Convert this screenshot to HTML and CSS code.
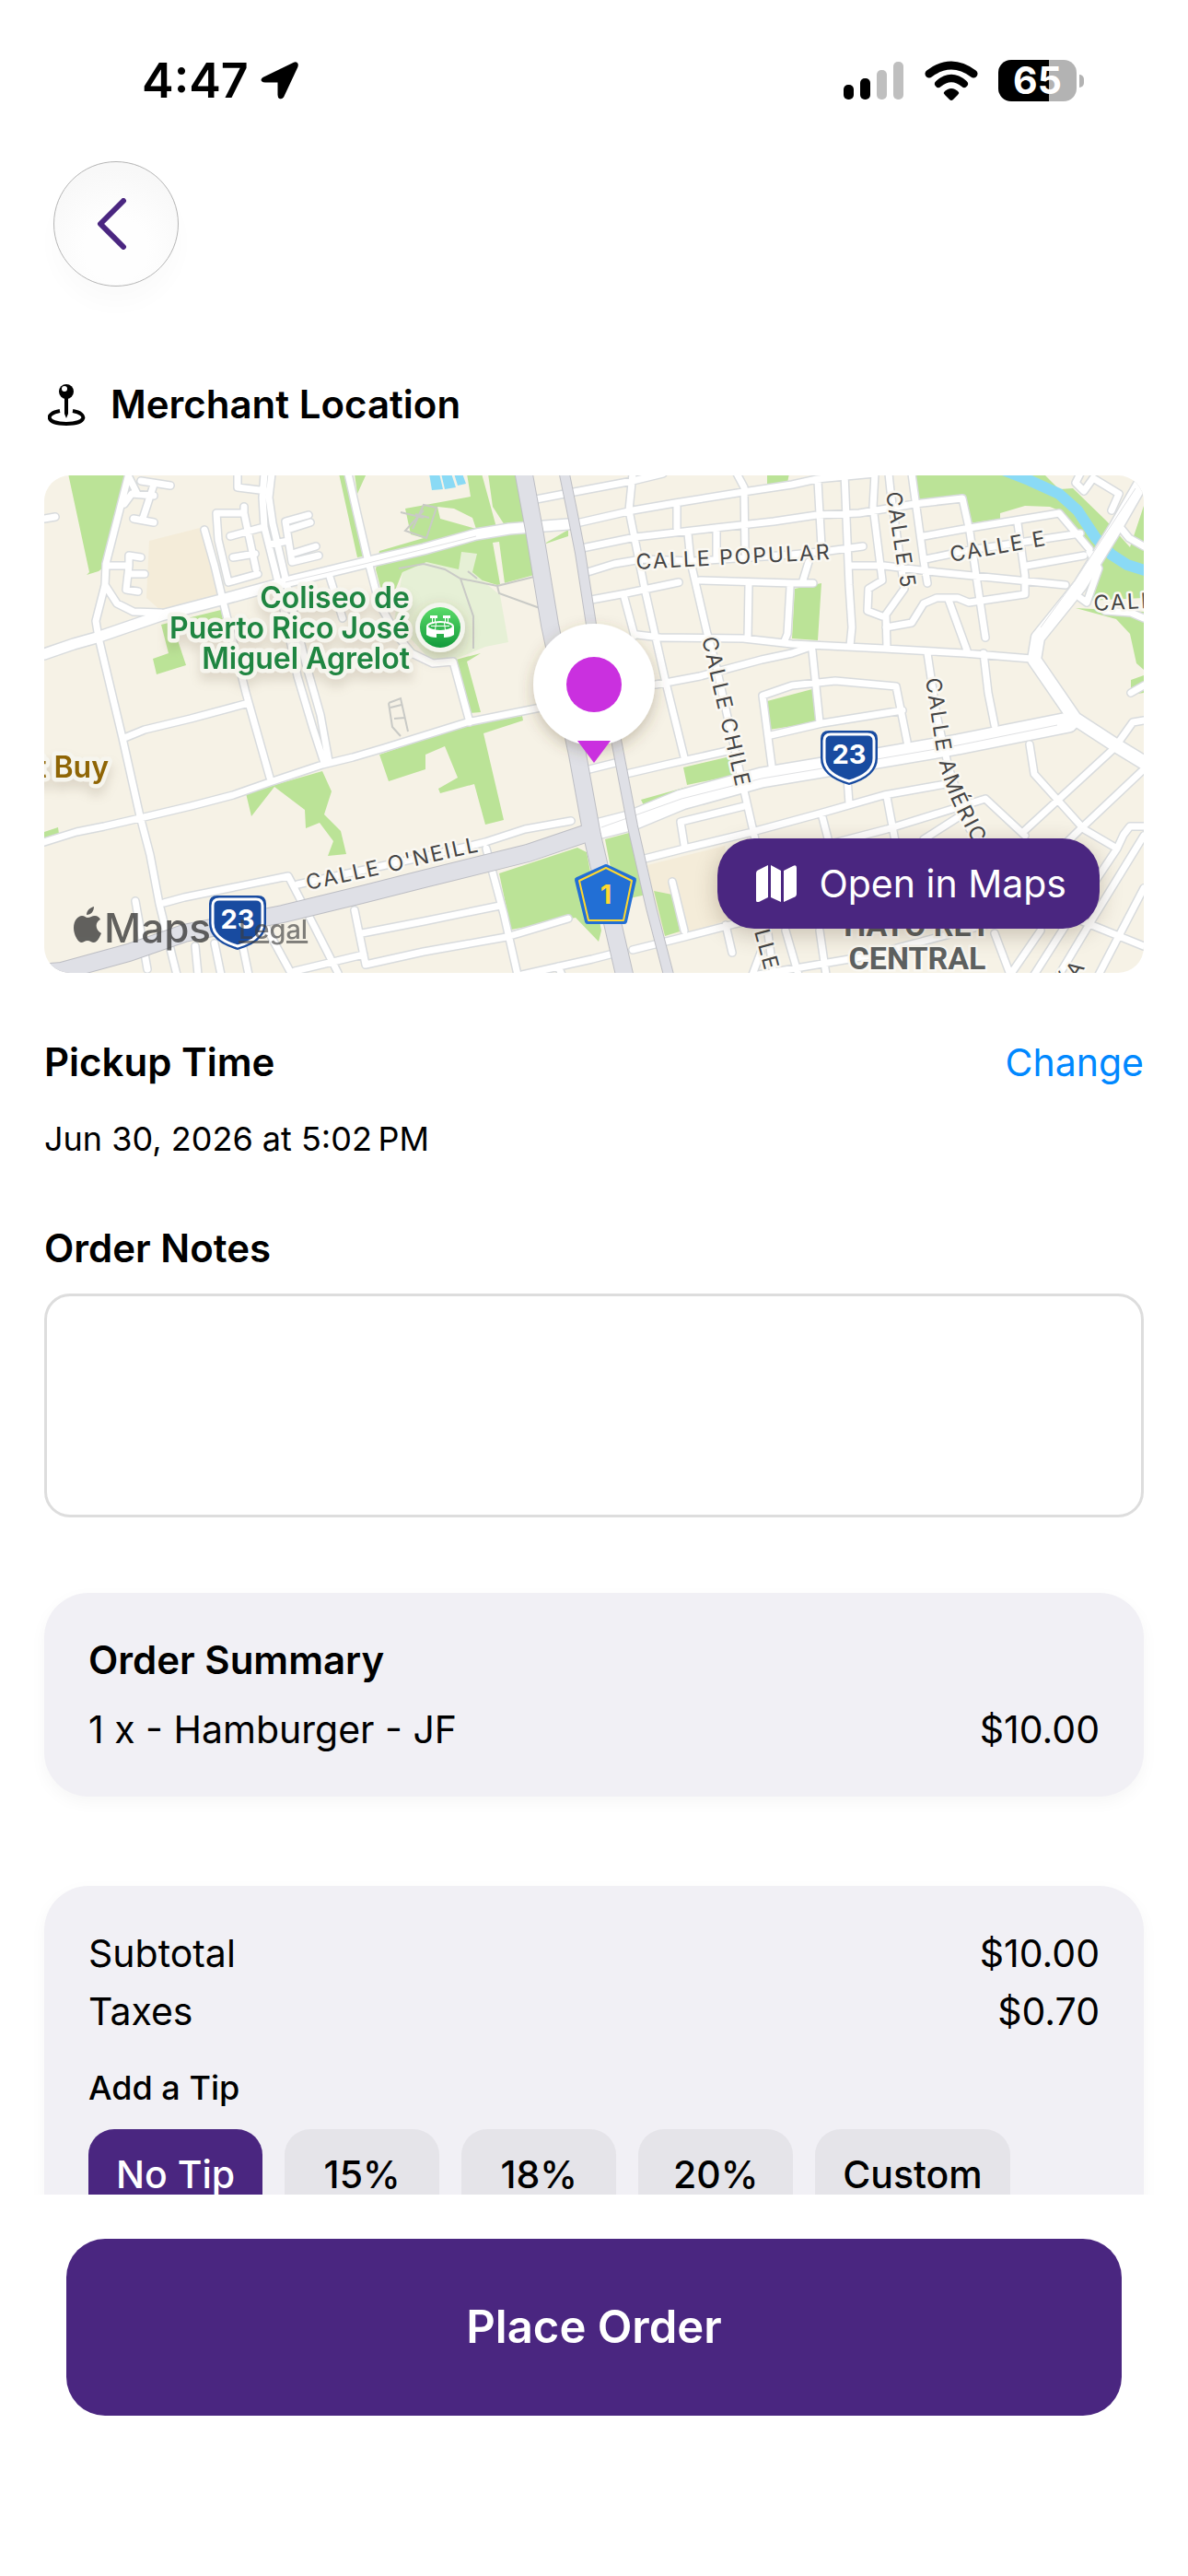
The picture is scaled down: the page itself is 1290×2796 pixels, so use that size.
FILE: index.html
```html
<!DOCTYPE html>
<html lang="en">

<head>
    <meta charset="UTF-8">
    <meta name="viewport" content="width=device-width, initial-scale=1.0">
    <title>Place Order</title>
    <link rel="stylesheet" href="styles.css">
</head>

<body>
    <div class="status-bar">
        <div class="status-left">
            <span class="clock">4:47</span>
            <svg class="arrow-icon" width="44" height="44" viewBox="0 0 44 44" aria-hidden="true">
                <path d="M5 20 38 4 Q40 3 39 6 L24 38 Q22 40 22 37 V21 H6 Q3 21 5 20Z" fill="#000" stroke="#000" stroke-width="5" stroke-linejoin="round" />
            </svg>
        </div>
        <div class="status-right">
            <svg width="66" height="42" viewBox="0 0 66 42" aria-hidden="true">
                <rect x="0" y="25" width="11" height="16" rx="5" />
                <rect x="18" y="18" width="11" height="23" rx="5" />
                <rect x="36" y="9" width="11" height="32" rx="5" fill="#bfbfbf" />
                <rect x="54" y="0" width="11" height="41" rx="5" fill="#bfbfbf" />
            </svg>
            <svg width="58" height="44" viewBox="0 0 58 44" aria-hidden="true">
                <path d="M5 14 Q29 -4 53 14" fill="none" stroke="#000" stroke-width="9" stroke-linecap="round" />
                <path d="M15 25 Q29 13 43 25" fill="none" stroke="#000" stroke-width="8" stroke-linecap="round" />
                <path d="M21 34 Q29 26 37 34 Q38 35 36 37 L31 42 Q29 44 27 42 L22 37 Q20 35 21 34Z" />
            </svg>
            <div class="battery">
                <span class="battery-body">65</span>
                <span class="battery-tip"></span>
            </div>
        </div>
    </div>

    <main class="content">
        <button class="back-button" type="button" aria-label="Back">
            <svg width="34" height="56" viewBox="0 0 34 56" aria-hidden="true">
                <path d="M29 3 4 28 29 53" fill="none" stroke="#4a2680" stroke-width="6" stroke-linecap="round" stroke-linejoin="round" />
            </svg>
        </button>

        <section class="location">
            <h2 class="location-title">
                <svg width="42" height="48" viewBox="0 0 42 48" aria-hidden="true">
                    <path d="M13 31 C-4 34 -2 45 20 45 S44 34 27 31" fill="none" stroke="#000" stroke-width="4" stroke-linecap="butt" />
                    <path d="M18 15 H22 V34 L20 39 18 34Z" />
                    <circle cx="20" cy="10" r="8" />
                    <circle cx="18" cy="7" r="3" fill="#fff" />
                </svg>
                Merchant Location
            </h2>
            <div class="map">
                <svg class="map-canvas" viewBox="0 0 1194 544" preserveAspectRatio="xMidYMid slice" role="img" aria-label="Map of the merchant location">
                    <defs>
                        <path id="streets" d="
                            M92 0 67 98 66 121 56 160 59 178 85 287 104 372 115 414 125 467 139 524 144 544
                            M66 121 79 141 97 150 127 151
                            M87 287 109 278 159 266 222 249
                            M174 61 185 100 195 142 219 238 245 330
                            M239 0 237 26 239 58 254 118 275 220 292 277 304 314
                            M247 0 244 26 248 54 262 114 284 206 300 262 309 312
                            M0 400 35 389 65 383 104 374 159 361 205 349 245 335 302 316 335 308 369 298 459 270 539 254
                            M664 229 712 220 779 202 812 195 835 187
                            M130 466 152 460 265 437 292 489 319 542
                            M99 464 112 538 M164 513 167 544 M185 510 192 544 M215 510 222 544 M239 489 269 544
                            M337 474 349 533 412 519 502 503 569 483
                            M345 499 412 486 495 469 M272 540 347 522
                            M480 407 499 478 514 544 M275 446 412 416 479 400 522 386 572 377
                            M519 544 595 527 622 520 M639 517 695 503 749 489 812 475 M558 535 562 544
                            M0 49 12 47 M105 8 137 13 M119 12 107 49 M97 49 119 53 M119 24 95 22 87 33 M92 4 101 22
                            M70 100 92 100 92 89 105 91 M92 100 89 126 102 128 M92 109 109 109
                            M210 0 210 15 242 19
                            M217 36 217 43 187 43 189 72 200 118 232 109 M217 43 230 104 M202 68 235 59 M205 91 229 87
                            M287 45 262 52 269 96 298 89 M264 61 289 53 M245 77 265 73 M269 87 295 79
                            M330 0 339 40 352 96 364 142 385 178 399 195 422 206 444 204 462 270
                            M310 112 324 157
                            M534 28 565 22 639 8 672 0
                            M569 56 639 40 685 32 759 20 812 12 839 6 902 0
                            M584 81 642 69 729 59 792 52 839 45 885 43 945 33 997 27 1005 63 1012 111 1022 178
                            M590 107 619 98 649 93 705 95 812 88 852 84 889 79
                            M594 137 632 130 689 118 M630 135 641 176
                            M644 175 669 178 759 179 812 185 912 190 999 195 1072 201
                            M639 0 635 40 652 125 675 227 695 308
                            M687 36 687 59 M699 65 702 96 720 174 729 206 759 340 772 397 792 544
                            M730 61 730 93 M752 0 760 15 761 86
                            M712 116 812 119 835 119 M830 96 823 119 M765 121 764 178 M810 123 807 174 803 184
                            M632 326 679 315 742 301 M592 321 620 314
                            M790 317 780 241 812 230 859 225 925 231 937 291
                            M789 284 845 271 932 257 M834 192 842 270
                            M840 8 844 79 M869 0 874 121 877 167 875 187
                            M902 0 900 36 910 116 895 125 894 149 910 155
                            M917 0 919 19 934 125 914 153 915 188 M942 0 955 95 959 119
                            M877 100 912 100 969 107 1109 121
                            M914 167 942 162 955 141 969 135 992 135 1004 140 1065 131 1065 111 1057 54
                            M955 68 1005 59 1102 43 1135 82 M957 93 1005 83 1125 65 M1067 100 1129 89
                            M982 137 1002 192
                            M1165 54 1178 70 1194 79 M1167 22 1139 5 1129 19 1120 10 1125 0 M1167 22 1159 40
                            M1125 135 1132 140 1145 103 1135 85 M1152 149 1180 151 1194 157 M1180 238 1194 230
                            M959 195 969 262 982 319 1005 386 M1020 195 1025 238 1032 273
                            M1070 294 1075 326 1129 386 1165 407 1172 392 1179 383 1194 383
                            M1194 321 1125 386 1080 430 M1194 268 1182 270 1162 298 1062 390
                            M1065 393 1022 353 915 386 842 405 792 415 M955 397 1005 365
                            M652 418 699 406 765 390 842 369 912 349 979 337
                            M872 330 874 358 M844 369 852 400 M915 351 925 404
                            M695 403 691 378 760 361 M682 443 695 496 M740 490 747 520
                            M1194 393 1135 489 1102 544 M1194 450 1145 544 M1165 407 1110 489 1075 544
                            M1125 485 1194 513 M1032 499 1049 544 1082 496 M805 496 819 544 M842 496 849 544
                            M769 544 778 520 M775 544 892 524 1025 489" />
                        <path id="avenues" d="
                            M0 196 32 185 57 178 127 154 192 137 262 118 352 96 412 82 469 66 505 60 569 55" />
                        <path id="main-road" d="M1197 0 1162 61 1125 121 1079 178 1075 202 1119 266 1162 294 1198 316" />
                        <path id="boulevard" d="M600 386 639 376 692 354 779 330 875 314 992 294 1112 270" />
                        <path id="highway" d="M-6 542 19 540 92 520 152 499 259 478 345 457 412 440 525 412 596 388" />
                        <path id="expressway" d="M520 -4 532 61 549 164 579 305 595 393 619 496 631 548" />
                        <path id="side-express" d="M564 -4 573 40 582 86 594 164 622 294 639 383 659 471 679 548" />
                        <linearGradient id="poi-fill" x1="0" y1="0" x2="0" y2="1">
                            <stop offset="0" stop-color="#5bdc69" />
                            <stop offset="1" stop-color="#119a3b" />
                        </linearGradient>
                        <filter id="soft-shadow" x="-30%" y="-30%" width="160%" height="170%">
                            <feDropShadow dx="0" dy="6" stdDeviation="8" flood-color="#5a4a2a" flood-opacity=".3" />
                        </filter>
                        <g id="shield-23">
                            <path d="M9 0 H53 Q62 0 62 9 V30 Q62 50 31 59 Q0 50 0 30 V9 Q0 0 9 0Z" fill="#184ba0" />
                            <path d="M11 4 H51 Q58 4 58 11 V30 Q58 47 31 55 Q4 47 4 30 V11 Q4 4 11 4Z" fill="none" stroke="#fff" stroke-width="3" />
                            <text class="shield-text" x="31" y="36">23</text>
                        </g>
                        <path id="oneill-path" d="M286 452 Q350 439 412 424 T490 408" />
                        <path id="america-path" d="M957 223 968 294 Q974 330 986 356 T1025 430" />
                    </defs>

                    <rect width="1194" height="544" fill="#f6f2e6" />

                    <!-- school and commercial blocks -->
                    <path fill="#f4ecd9" d="M114 73 169 59 192 130 127 149 111 135Z M655 425 739 404 755 480 699 499 668 500Z" />

                    <!-- parks -->
                    <path fill="#bbe397" d="
                        M26 0H89L67 100 59 106 46 110 49 107Z
                        M320 0H350L340 22 337 0 329 0 350 89 340 91Z
                        M127 164 192 148 194 158 142 172 154 208 122 218 118 201 135 195Z
                        M219 347 302 323 312 345 304 370 322 388 328 413 308 415 314 399 299 379 284 385 283 365 250 340 225 372Z
                        M364 305 459 273 519 263 520 268 477 282 499 376 479 381 467 337 430 347 428 342 449 330 435 296 414 305 414 321 374 334Z
                        M0 389 15 384 16 391 0 396Z
                        M459 0H512L532 110 492 121 440 105 389 107 372 149 360 104 364 84 412 70 398 66 392 38 463 25Z
                        M447 202 474 195 459 204 474 259 462 260Z
                        M545 75 569 61 569 68 545 76Z
                        M694 319 745 307 747 328 698 338Z M648 354 698 340 652 362Z
                        M494 434 579 406 589 411 605 496 602 508 577 482 507 495Z
                        M609 397 635 390 654 457 622 464Z M662 453 682 457 690 497 674 502Z
                        M785 247 834 234 839 270 787 278Z M785 0H809L807 10 785 13Z
                        M815 125 844 119 840 181 812 179Z
                        M945 0H1085L1102 17 1117 16 1154 52 1179 80 1194 35 1194 135 1132 138 1145 103 1135 75 1102 40 1092 36 1065 35 1038 43 1038 49 1005 54 997 27 950 28Z
                        M1120 146 1194 150 1194 213 1186 206 1179 174 1164 158Z M1180 224 1194 219V238L1180 240Z" />
                    <path fill="#f6f2e6" d="M475 0H482L487 36 500 56 492 62Z M427 36 445 38 465 48 469 60 430 49Z M487 75 494 74 500 119 495 120Z" />

                    <!-- arena grounds -->
                    <path fill="#e6f0d6" d="M389 107 415 96 450 104 453 85 470 87 465 107 495 132 504 183 479 188 445 202 422 205 380 160Z" />
                    <g fill="none" stroke="#c9cac6" stroke-width="2">
                        <path d="M387 42 412 48 M412 40 392 62 415 70 426 37 412 34 400 60 M403 44 418 48" />
                        <path d="M385 103 412 98 435 104 452 114 492 122 532 112 M452 114 466 155 466 190 M492 122 494 130 538 146 M460 106 470 114" />
                        <path d="M374 249 387 244 395 280 M374 249 378 275 387 285 M376 254 388 251 M380 266 392 265" />
                    </g>

                    <!-- water -->
                    <path d="M1036 -6 1069 7 1102 22 1122 40 1142 70 1159 88 1176 99 1198 106" fill="none" stroke="#8adaf5" stroke-width="12" />
                    <path fill="#8adaf5" d="M418 0H429L433 17 421 18Z M431 0H442L447 15 435 17Z M445 0H454L458 11 449 13Z" />

                    <!-- casing is drawn first, then the road surface -->
                    <g class="road-casing">
                        <use href="#streets" stroke-width="10" />
                        <use href="#avenues" stroke-width="14" />
                        <use href="#main-road" stroke-width="17" />
                        <use href="#boulevard" stroke-width="24" />
                    </g>
                    <g class="road-fill">
                        <use href="#streets" stroke-width="7" />
                        <use href="#avenues" stroke-width="11" />
                        <use href="#main-road" stroke-width="14" />
                        <use href="#boulevard" stroke-width="21" />
                    </g>
                    <g fill="none" stroke="#e0e1e3" stroke-width="1">
                        <path d="M605 384 692 353 779 331 875 315 992 295 1100 273 M262 118 352 97 469 68 M1185 16 1120 115 1082 167" />
                    </g>
                    <g class="highway-casing">
                        <use href="#highway" stroke-width="20" />
                        <use href="#side-express" stroke-width="12" />
                        <use href="#expressway" stroke-width="20" />
                    </g>
                    <g class="highway-fill">
                        <use href="#highway" stroke-width="18" />
                        <use href="#side-express" stroke-width="10" />
                        <use href="#expressway" stroke-width="18" />
                    </g>

                    <!-- street names -->
                    <g class="street-name">
                        <text transform="translate(643 104) rotate(-3)">CALLE POPULAR</text>
                        <text transform="translate(914 21) rotate(81)">CALLE 5</text>
                        <text transform="translate(985 96) rotate(-10)">CALLE E</text>
                        <text transform="translate(1140 149) rotate(-3)">CALLE C</text>
                        <text transform="translate(714 179) rotate(77)">CALLE CHILE</text>
                        <text transform="translate(771 497) rotate(75)">LLE</text>
                        <text transform="translate(1117 556) rotate(-56)">ÍA</text>
                        <text><textPath href="#oneill-path">CALLE O'NEILL</textPath></text>
                        <text><textPath href="#america-path">CALLE AMÉRICA</textPath></text>
                    </g>
                    <g class="district-name">
                        <text x="948" y="502">HATO REY</text>
                        <text x="948" y="538">CENTRAL</text>
                    </g>

                    <g class="poi-name">
                        <text x="397" y="146">Coliseo de</text>
                        <text x="397" y="179">Puerto Rico José</text>
                        <text x="397" y="212">Miguel Agrelot</text>
                        <text class="poi-shop" x="70" y="330">Best Buy</text>
                    </g>
                    <circle cx="430" cy="167" r="27" fill="#f4f5ee" filter="url(#soft-shadow)" />
                    <circle cx="430" cy="167" r="22" fill="url(#poi-fill)" />
                    <g fill="#fff">
                        <path d="M419 154h8v3h-8zM433 154h8v3h-8zM421 157h1v5h-1zM424 157h1v5h-1zM435 157h1v5h-1zM438 157h1v5h-1z" />
                        <path d="M415 166 Q430 175 445 166 V175 Q441 178 434 178 V174 H426 V178 Q419 178 415 175Z" />
                        <ellipse cx="430" cy="166" rx="14" ry="5" fill="none" stroke="#fff" stroke-width="2" />
                        <path d="M420 165h20v1h-20zM425 162h1l-1 8h-1zM434 162h1l1 8h-1z" />
                    </g>

                    <use href="#shield-23" x="843" y="279" />
                    <use href="#shield-23" x="179" y="458" />
                    <path d="M610 427 640 441 630 486 H590 L579 441Z" fill="#226fd5" stroke="#226fd5" stroke-width="6" stroke-linejoin="round" />
                    <path d="M610 428 638 442 629 485 H591 L581 442Z" fill="none" stroke="#ffd82f" stroke-width="2" stroke-linejoin="round" />
                    <text class="shield-text shield-yellow" x="610" y="467">1</text>

                    <!-- merchant pin -->
                    <circle cx="597" cy="229" r="66" fill="#fff" filter="url(#soft-shadow)" />
                    <circle cx="597" cy="229" r="30" fill="#ca30df" />
                    <path d="M579 290H615L597 314Z" fill="#ca30df" />

                    <!-- attribution -->
                    <g class="attribution">
                        <path d="M47 482 C50 482 52 480 55 480 C58 480 60 482 61 484 C55 487 55 495 62 499 C60 504 57 509 54 509 C51 509 50 507 47 507 C44 507 43 509 40 509 C36 508 32 500 32 493 C32 485 37 480 41 480 C44 480 45 482 47 482Z M46 479 C46 474 50 471 54 470 C54 475 51 479 46 479Z" />
                        <text class="maps-mark" x="65" y="509">Maps</text>
                        <text class="legal-mark" x="211" y="505">Legal</text>
                    </g>
                </svg>
                <a class="open-maps" href="#">
                    <svg width="44" height="40" viewBox="0 0 44 40" aria-hidden="true">
                        <path d="M0 9 Q0 6 3 5 L13 0 V35 L3 40 Q0 41 0 38Z M16 0 27 6 V40 L16 35Z M30 6 40 1 Q44 -1 44 3 V31 Q44 34 41 35 L30 40Z" fill="#fff" />
                    </svg>
                    Open in Maps
                </a>
            </div>
        </section>

        <section class="pickup">
            <div class="row">
                <h2>Pickup Time</h2>
                <button class="change-button" type="button">Change</button>
            </div>
            <p class="pickup-time">Jun 30, 2026 at 5:02&#8239;PM</p>
        </section>

        <section class="notes">
            <label for="order-notes">Order Notes</label>
            <textarea id="order-notes"></textarea>
        </section>

        <section class="card summary">
            <h2>Order Summary</h2>
            <div class="row">
                <span>1 x - Hamburger - JF</span>
                <span>$10.00</span>
            </div>
        </section>

        <section class="card totals">
            <div class="row">
                <span>Subtotal</span>
                <span>$10.00</span>
            </div>
            <div class="row">
                <span>Taxes</span>
                <span>$0.70</span>
            </div>
            <h3>Add a Tip</h3>
            <div class="tips">
                <button class="tip selected" type="button">No Tip</button>
                <button class="tip" type="button">15%</button>
                <button class="tip" type="button">18%</button>
                <button class="tip" type="button">20%</button>
                <button class="tip" type="button">Custom</button>
            </div>
        </section>
    </main>

    <footer class="checkout">
        <button class="place-order" type="button">Place Order</button>
    </footer>

    <script>
        const tips = document.querySelectorAll('.tip');

        // Only one tip can be selected at a time
        tips.forEach(tip => {
            tip.addEventListener('click', () => {
                tips.forEach(other => other.classList.remove('selected'));
                tip.classList.add('selected');
            });
        });
    </script>
</body>

</html>
```

FILE: styles.css
```css
* {
    box-sizing: border-box;
}

body {
    font-family: Inter, "Liberation Sans", sans-serif;
    font-size: 41px;
    line-height: 50px;
    color: #000;
    background-color: #fff;
    margin: 0;
    height: 100vh;
    display: flex;
    flex-direction: column;
}

h2,
h3,
p {
    margin: 0;
}

h2,
label {
    font-size: 42px;
    font-weight: 600;
}

button {
    font: inherit;
    border: none;
    padding: 0;
    cursor: pointer;
}

/* Status bar */
.status-bar {
    display: flex;
    justify-content: space-between;
    align-items: center;
    height: 175px;
    flex-shrink: 0;
    padding: 0 113px 0 154px;
}

.status-left,
.status-right,
.battery {
    display: flex;
    align-items: center;
}

.status-left {
    gap: 12px;
}

.status-right {
    gap: 22px;
}

.clock {
    font-size: 52px;
    font-weight: 600;
}

.battery {
    gap: 3px;
}

.battery-body {
    width: 85px;
    height: 45px;
    border-radius: 14px;
    background: linear-gradient(to right, #000 65%, #b3b3b3 65%);
    color: #fff;
    font-size: 41px;
    font-weight: 700;
    line-height: 45px;
    text-align: center;
}

.battery-tip {
    width: 5px;
    height: 14px;
    border-radius: 0 5px 5px 0;
    background-color: #b3b3b3;
}

/* Scrolling content */
.content {
    flex: 1;
    min-height: 0;
    overflow-y: auto;
    scrollbar-width: none;
    padding: 0 48px;
}

.back-button {
    display: flex;
    justify-content: center;
    align-items: center;
    width: 136px;
    height: 136px;
    margin-left: 10px;
    padding-right: 8px;
    border: 1px solid #b5b5b5;
    border-radius: 50%;
    background: radial-gradient(circle at 50% 70%, #fefefe 30%, #f8f8f8 75%);
    box-shadow: 0 20px 24px rgba(0, 0, 0, 0.02);
}

.location {
    margin-top: 103px;
}

.location-title {
    display: flex;
    align-items: center;
    gap: 26px;
    padding-left: 4px;
}

.map {
    position: relative;
    margin-top: 52px;
    height: 540px;
    border-radius: 28px;
    overflow: hidden;
}

.map-canvas {
    display: block;
    width: 100%;
    height: 100%;
}

.map-canvas text {
    font-family: Inter, "Liberation Sans", sans-serif;
}

.road-casing,
.road-fill {
    fill: none;
    stroke-linecap: round;
    stroke-linejoin: round;
}

.road-casing {
    stroke: #d8dbdd;
}

.road-fill {
    stroke: #fff;
}

.highway-casing {
    fill: none;
    stroke: #bdbec4;
}

.highway-fill {
    fill: none;
    stroke: #dfe0e6;
}

.street-name {
    font-size: 23px;
    letter-spacing: 2px;
    fill: #444;
    stroke: #faf8f2;
    stroke-width: 5px;
    stroke-linejoin: round;
    paint-order: stroke;
}

.map-canvas .district-name text {
    font-family: "Liberation Sans Narrow", Roboto, sans-serif;
    font-size: 34px;
    font-weight: 700;
    fill: #5d605f;
    stroke: #faf8f2;
    stroke-width: 5px;
    paint-order: stroke;
    text-anchor: middle;
}

.poi-name {
    font-size: 32px;
    font-weight: 600;
    fill: #1f8541;
    stroke: #f6f5ee;
    stroke-width: 9px;
    stroke-linejoin: round;
    paint-order: stroke;
    text-anchor: end;
    filter: drop-shadow(0 8px 6px rgba(90, 70, 40, 0.15));
}

.poi-shop {
    fill: #8f6505;
}

.shield-text {
    font-size: 29px;
    font-weight: 700;
    fill: #fff;
    text-anchor: middle;
}

.shield-yellow {
    fill: #ffd82f;
}

.attribution {
    fill: #3c3c3c;
    opacity: 0.8;
}

.maps-mark {
    font-size: 44px;
    font-weight: 500;
}

.legal-mark {
    font-size: 29px;
    font-weight: 500;
    opacity: 0.8;
    text-decoration: underline;
}

.open-maps {
    position: absolute;
    right: 48px;
    bottom: 48px;
    display: flex;
    align-items: center;
    gap: 24px;
    padding: 24px 36px 24px 42px;
    border-radius: 40px;
    background-color: #4a2680;
    color: #fff;
    text-decoration: none;
    box-shadow: 0 6px 24px rgba(60, 40, 20, 0.25);
}

/* Pickup time and notes */
.pickup,
.notes {
    margin-top: 72px;
}

.row {
    display: flex;
    justify-content: space-between;
}

.change-button {
    background: none;
    color: #0088ff;
}

.pickup-time {
    margin-top: 36px;
    font-size: 36px;
    line-height: 44px;
}

.notes {
    display: flex;
    flex-direction: column;
    gap: 24px;
}

.notes textarea {
    height: 243px;
    padding: 24px;
    border: 3px solid #ddd;
    border-radius: 28px;
    background-color: #fff;
    font: inherit;
    resize: none;
}

/* Cards */
.card {
    display: flex;
    flex-direction: column;
    padding: 48px;
    border-radius: 48px;
    background-color: #f1f0f5;
    box-shadow: 0 6px 18px rgba(0, 0, 0, 0.04);
}

.summary {
    gap: 25px;
    margin-top: 82px;
}

.totals {
    gap: 13px;
    margin-top: 97px;
}

.totals h3 {
    margin-top: 23px;
    font-size: 36px;
    font-weight: 500;
    line-height: 44px;
}

.tips {
    display: flex;
    gap: 24px;
    margin-top: 10px;
}

.tip {
    min-width: 168px;
    padding: 24px 30px;
    border-radius: 28px;
    background-color: #e5e4e9;
    color: #000;
    font-weight: 500;
}

.tip.selected {
    background-color: #4a2680;
    color: #fff;
}

/* Checkout */
.checkout {
    position: relative;
    display: flex;
    flex-shrink: 0;
    padding: 48px 72px 174px;
    background-color: #fff;
}

.place-order {
    flex: 1;
    height: 192px;
    border-radius: 42px;
    background-color: #4a2680;
    color: #fff;
    font-size: 49px;
    font-weight: 600;
}
```
